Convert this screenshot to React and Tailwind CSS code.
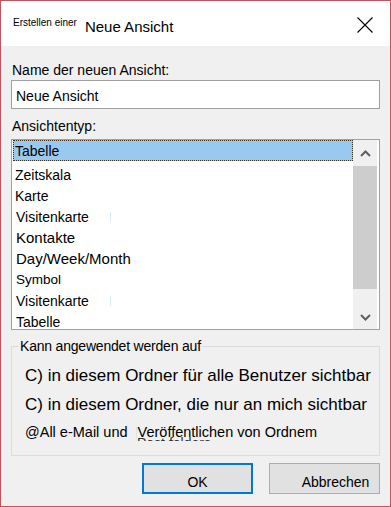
import React from 'react';

const viewTypes = [
  { label: 'Tabelle', size: 'text-[14px] leading-[16px]', pad: 'pl-[1px]' },
  { label: 'Zeitskala', size: 'text-[14px] leading-[16px]', pad: 'pl-[1px]' },
  { label: 'Karte', size: 'text-[14px] leading-[16px]', pad: 'pl-[1px]' },
  { label: 'Visitenkarte', size: 'text-[14px] leading-[16px]', pad: 'pl-[2px]', mark: true },
  { label: 'Kontakte', size: 'text-[15px] leading-[18px]', pad: 'pl-[2px]' },
  { label: 'Day/Week/Month', size: 'text-[15px] leading-[18px]', pad: 'pl-[2px]' },
  { label: 'Symbol', size: 'text-[13.5px] leading-[15px]', pad: 'pl-[2px]' },
  { label: 'Visitenkarte', size: 'text-[14px] leading-[16px]', pad: 'pl-[2px]', mark: true },
  { label: 'Tabelle', size: 'text-[14px] leading-[16px]', pad: 'pl-[2px]' },
];

const Chevron = ({ down }) => (
  <svg width="11" height="7" viewBox="0 0 11 7">
    <polyline
      points={down ? '1,1 5.5,5.5 10,1' : '1,6 5.5,1.5 10,6'}
      fill="none"
      stroke="#606060"
      strokeWidth="2"
    />
  </svg>
);

const App = () => {
  const [selected, setSelected] = React.useState(0);

  return (
    <div
      className="w-[391px] h-[507px] border border-[#c4515c] bg-[#f0f0f0] text-black flex flex-col"
      style={{ fontFamily: '"Liberation Sans", Arial, sans-serif' }}
    >
      {/* Title bar */}
      <div className="h-[45px] bg-white flex items-start justify-between shrink-0">
        <div className="flex items-start pl-[12px]">
          <span className="mt-[16px] text-[10px] leading-[12px]">Erstellen einer</span>
          <span className="mt-[17px] ml-[8px] text-[15px] leading-[18px]">Neue Ansicht</span>
        </div>
        <button className="mt-[16px] mr-[17px]">
          <svg width="16" height="16" viewBox="0 0 16 16">
            <path d="M0.5 0.5 L15.5 15.5 M15.5 0.5 L0.5 15.5" stroke="#000" strokeWidth="1.1" fill="none" />
          </svg>
        </button>
      </div>

      {/* Body */}
      <div className="flex-1 flex flex-col px-[10px] pt-[16px]">
        <label className="text-[14px] leading-[16px] pl-[1px]">Name der neuen Ansicht:</label>
        <div className="mt-[2px] h-[29px] w-full border border-[#a0a0a0] bg-white pl-[4px] pt-[7px]">
          <span className="text-[14px] leading-[16px] block">Neue Ansicht</span>
        </div>

        <label className="mt-[9px] text-[14px] leading-[16px] pl-[1px]">Ansichtentyp:</label>
        <div className="mt-[5px] h-[191px] w-[369px] border border-[#a0a0a0] bg-white flex overflow-hidden">
          <div className="flex-1 flex flex-col overflow-hidden">
            {viewTypes.map((item, i) => {
              const isSel = selected === i;
              return (
                <div
                  key={i}
                  onClick={() => setSelected(i)}
                  className={`ml-[1px] h-[21px] shrink-0 flex border ${item.pad} ${
                    i === 0 ? 'items-start pt-[2px] mb-[3px]' : 'items-center'
                  } ${isSel ? 'bg-[#99c9ef] border-dotted border-[#3b2d20]' : 'border-transparent'}`}
                >
                  <span className={item.size}>{item.label}</span>
                  {item.mark && <span className="ml-[21px] inline-block w-px h-[10px] bg-[#d4ecf4]" />}
                </div>
              );
            })}
          </div>
          <div className="w-[24px] bg-[#f0f0f0] flex flex-col shrink-0">
            <div className="h-[26px] flex items-center justify-center">
              <Chevron />
            </div>
            <div className="h-[123px] bg-[#cdcdcd]" />
            <div className="flex-1" />
            <div className="h-[24px] flex items-center justify-center">
              <Chevron down />
            </div>
          </div>
          <div className="w-[2px] shrink-0" />
        </div>

        {/* Group box */}
        <fieldset className="mt-[8px] w-[369px] border border-[#dcdcdc] pb-[14px]">
          <legend className="ml-[7px] px-[1px] text-[14px] leading-[16px] tracking-[-0.2px]">
            Kann angewendet werden auf
          </legend>
          <div className="pl-[13px]">
            <p className="mt-[12px] text-[17px] leading-[20px]">C) in diesem Ordner für alle Benutzer sichtbar</p>
            <p className="mt-[9px] text-[17px] leading-[20px]">C) in diesem Ordner, die nur an mich sichtbar</p>
            <div className="relative mt-[9px] flex items-center text-[14.5px] leading-[17px]">
              <span>@All e-Mail und</span>
              <span className="ml-[8px] inline-block w-px h-[11px] bg-[#d8e6ec]" />
              <span className="ml-[1px]">Veröffentlichen von Ordnem</span>
              <div className="absolute left-[112px] top-[12px] h-[5px] overflow-hidden">
                <span className="block text-[14px] leading-[16px] text-[#333] -mt-[1px]">Post folders</span>
              </div>
            </div>
          </div>
        </fieldset>

        {/* Buttons */}
        <div className="mt-[7px] w-[369px] flex justify-end gap-[16px]">
          <button className="w-[111px] h-[31px] border-2 border-[#0078d7] bg-[#e1e1e1] flex items-center justify-center pt-[6px] text-[14px] leading-[16px]">
            OK
          </button>
          <button className="w-[111px] h-[31px] border border-[#adadad] bg-[#e1e1e1] flex items-center justify-center pt-[6px] pl-[22px] text-[14px] leading-[16px]">
            Abbrechen
          </button>
        </div>
      </div>
    </div>
  );
};

export default App;
